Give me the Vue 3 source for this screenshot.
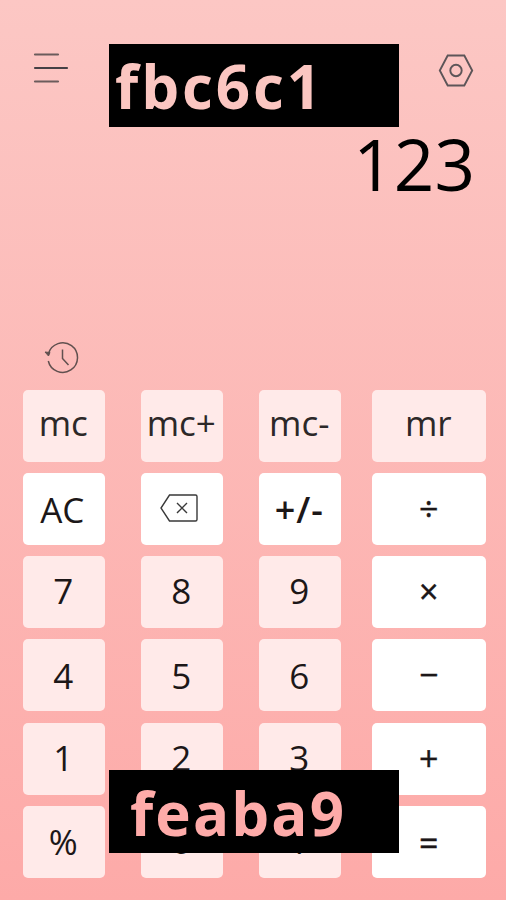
<script setup>
import { ref } from 'vue'

const result = ref('123')

const rows = [
  { name: 'memory', keys: [{ text: 'mc' }, { text: 'mc+' }, { text: 'mc-' }, { text: 'mr' }] },
  { name: 'edit', keys: [{ text: 'AC', type: 'clear' }, { text: '', type: 'back' }, { text: '+/-', type: 'sign' }, { text: '÷', type: 'op' }] },
  { name: 'seven', keys: [{ text: '7' }, { text: '8' }, { text: '9' }, { text: '×', type: 'op' }] },
  { name: 'four', keys: [{ text: '4' }, { text: '5' }, { text: '6' }, { text: '−', type: 'op' }] },
  { name: 'one', keys: [{ text: '1' }, { text: '2' }, { text: '3' }, { text: '+', type: 'op' }] },
  { name: 'zero', keys: [{ text: '%' }, { text: '0' }, { text: '.' }, { text: '=', type: 'op' }] }
]
</script>

<template>
  <div class="calculator">
    <header class="header">
      <svg class="menu" viewBox="0 0 36 34">
        <path d="M2 3.5H25M2 30.5H25" stroke="#6b5c5c" />
        <path d="M2 17H34" stroke="#454045" />
      </svg>
      <svg class="setting" viewBox="0 0 36 34">
        <path d="M9.7 1.5H26.3L34.2 16.5L26.3 31.5H9.7L1.8 16.5Z" />
        <circle cx="18" cy="16.5" r="5.7" />
      </svg>
    </header>
    <div class="result">{{ result }}</div>
    <div class="history">
      <svg viewBox="0 0 36 34">
        <path d="M4.5 12.5A14.8 14.8 0 1 1 4.3 20" />
        <path class="arrow" d="M1 11L4.5 15L6 11.5Z" />
        <path d="M18.5 8.5V17.5L24.5 24" />
      </svg>
    </div>
    <div class="keyboard">
      <div v-for="row in rows" :key="row.name" class="row" :class="row.name">
        <button v-for="key in row.keys" :key="key.text" class="key" :class="key.type">
          <svg v-if="key.type === 'back'" viewBox="0 0 38 28">
            <path d="M9.5 1H35.5Q37 1 37 2.5V25.5Q37 27 35.5 27H9.5L1 14Z" />
            <path d="M17 9L27 19M27 9L17 19" />
          </svg>
          <span v-else>{{ key.text }}</span>
        </button>
      </div>
    </div>
    <div class="tag tag-top"><span>fbc6c1</span></div>
    <div class="tag tag-bottom"><span>feaba9</span></div>
  </div>
</template>

<style>
body { margin: 0; }
</style>

<style scoped>
.calculator {
  position: relative;
  box-sizing: border-box;
  width: 506px;
  height: 900px;
  overflow: hidden;
  background: linear-gradient(to bottom, #fcc7c4, #fdaaa8);
  font-family: "Open Sans", "Noto Sans", sans-serif;
}
.header { display: flex; justify-content: space-between; height: 125px; padding: 51px 32px 0 33px; box-sizing: border-box; }
.header svg { width: 36px; height: 34px; fill: none; stroke-width: 2.2; stroke-linecap: round; }
.header .setting { margin-top: 3px; stroke: #5d5558; stroke-width: 1.9; }
.result { height: 214px; padding-right: 31px; font-size: 71px; line-height: 77px; text-align: right; color: #000; }
.history { height: 50.5px; padding-left: 44px; box-sizing: border-box; }
.history svg { display: block; width: 36px; height: 34px; padding-top: 2px; fill: none; stroke: #61504f; stroke-width: 1.5; }
.history .arrow { fill: #61504f; stroke-width: 1; }
.keyboard { display: grid; gap: 11.2px; padding-left: 22.5px; }
.row { display: grid; grid-template-columns: 82.5px 82.5px 82.5px 113.5px; column-gap: 35.5px; }
.key {
  display: flex;
  align-items: center;
  justify-content: center;
  height: 72.1px;
  padding: 0;
  border: 0;
  border-radius: 5px;
  background: #ffeae9;
  color: #1c1718;
  font-family: inherit;
  font-size: 35px;
  line-height: 48px;
}
.key:nth-child(4) { margin-left: -4.5px; margin-right: 4.5px; }
.key span { position: relative; left: -0.5px; top: -1px; }
.memory .key { color: #2c2828; }
.memory .key span { top: -3px; }
.edit .key span { top: 1px; }
.four .key span { top: 1px; }
.zero .key span { top: 0; }
.zero .key:nth-child(2) span, .zero .key:nth-child(3) span { top: -1px; }
.clear, .back, .sign, .op { background: #fff; }
.clear span { left: -1.5px; }
.sign { font-weight: 600; font-size: 36px; letter-spacing: 1px; }
.key.op { font-weight: 500; font-size: 34px; -webkit-text-stroke: 0.4px #1c1718; }
.key.op span { left: 0; top: -1px; }
.zero .key.op span { top: 1px; }
.back svg { width: 38px; height: 28px; margin-left: -5px; margin-top: -1px; fill: none; stroke: #393939; stroke-width: 1.4; }
.tag { position: absolute; left: 109px; width: 290px; height: 83.5px; background: #000; font-size: 60px; font-weight: 700; line-height: 83px; white-space: nowrap; }
.tag span { display: block; }
.tag-top { top: 43.5px; padding-left: 6px; box-sizing: border-box; color: #fbc6c1; letter-spacing: 2.9px; line-height: 84px; }
.tag-bottom { top: 769.5px; padding-left: 21px; box-sizing: border-box; color: #feaba9; letter-spacing: 2.1px; line-height: 87px; }
</style>
